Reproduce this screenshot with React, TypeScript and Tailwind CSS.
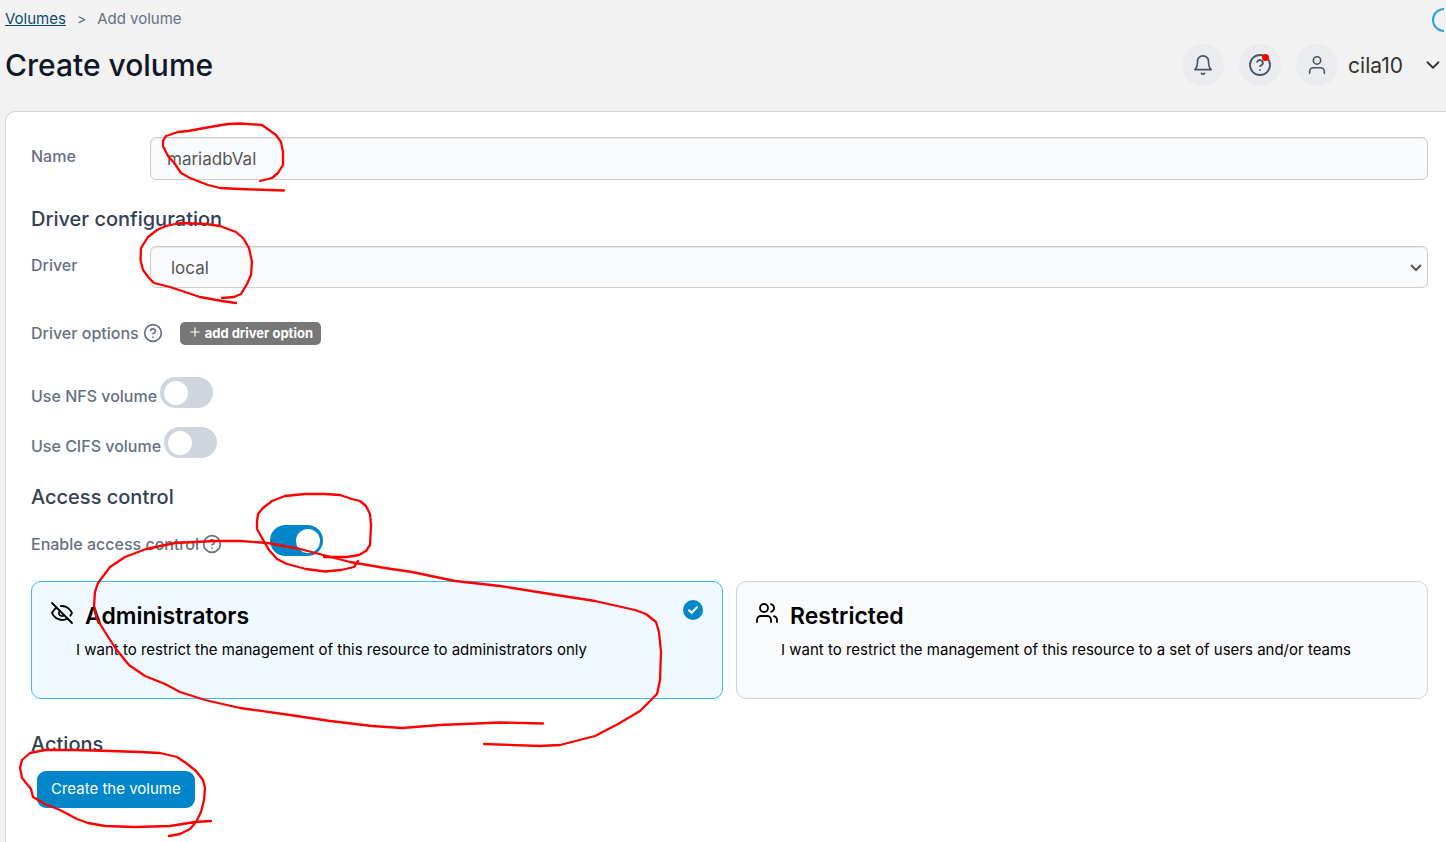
import { useState } from 'react'
import type { ReactNode } from 'react'
import { ChevronDown, HelpCircle, Plus } from 'lucide-react'
import { clsx } from 'clsx'

type Ownership = 'administrators' | 'restricted'

// Pen strokes drawn over the form.
const STROKES = [
  // name
  'M260 181 L272 178 L278 173 L283 165 L283 152 L281 142 L276 135 L262 125 L240 123.5 L228 124 L210 127 L188 131 L178 132 L166 136 L163 141 L163 146 L168 156 L175 164 L181 173 L190 178 L208 185 L220 188 L240 189 L284 190.5',
  // driver
  'M222 298 L234 297 L241 294 L247 284 L251 275 L252 262 L249 248 L243 238 L236 232 L220 226 L206 224 L180 223 L166 226 L157 230 L148 237 L141 248 L140.5 260 L143 270 L149 278 L154 283 L170 287 L200 297 L222 301 L236 303',
  // access control toggle
  'M324 557 L347 557 L359 555 L366 551 L370 545 L371 525 L370 514 L366 506 L360 501 L352 499 L340 495 L325 494 L305 494 L285 496 L272 501 L263 508 L258 514 L257 522 L257 529 L262 538 L269 550 L277 559 L287 564 L306 569 L325 571.5 L341 570 L354 567 L358 561',
  // administrators
  'M543 723.5 L500 722.5 L440 725 L402 728 L372 726 L330 721 L290 715 L240 708 L205 700 L180 692 L165 684 L145 676 L129 665 L116 649 L105 632 L97 619 L94 606 L95 592 L98 583 L110 567 L125 557 L146 549 L175 543 L215 541 L240 541 L268 543 L300 549 L350 562 L385 568 L412 572 L455 581 L500 586 L550 594 L595 601 L635 610 L646 614 L656 622 L659 632 L661 652 L660 680 L657 694 L640 711 L618 724 L595 736 L560 745 L540 746 L484 744',
  // create button
  'M211 821 L195 822 L170 826 L135 827 L105 826 L88 823 L77 819 L60 810 L45 804 L33 797 L31 789 L22 778 L20 768 L22 760 L30 753 L45 750 L75 750 L110 751 L140 752 L160 753 L177 757 L186 763 L196 771 L203 780 L205 788 L204 800 L201 812 L196 822 L190 829 L180 834 L169 836',
]

function Icon({ size, children }: { size: number; children: ReactNode }) {
  return (
    <svg
      width={size}
      height={size}
      viewBox="0 0 24 24"
      fill="none"
      stroke="currentColor"
      strokeWidth="1.8"
      strokeLinecap="round"
      strokeLinejoin="round"
      aria-hidden="true"
      className="shrink-0"
    >
      {children}
    </svg>
  )
}

function BellIcon() {
  return (
    <Icon size={22}>
      <path d="M18 8A6 6 0 0 0 6 8c0 7-3 9-3 9h18s-3-2-3-9" />
      <path d="M13.73 21a2 2 0 0 1-3.46 0" />
    </Icon>
  )
}

function UserIcon() {
  return (
    <Icon size={22}>
      <path d="M20 21v-2a4 4 0 0 0-4-4H8a4 4 0 0 0-4 4v2" />
      <circle cx="12" cy="7" r="4" />
    </Icon>
  )
}

function EyeOffIcon() {
  return (
    <Icon size={24}>
      <path d="M9.88 9.88a3 3 0 1 0 4.24 4.24" />
      <path d="M10.73 5.08A10.43 10.43 0 0 1 12 5c7 0 10 7 10 7a13.16 13.16 0 0 1-1.67 2.68" />
      <path d="M6.61 6.61A13.526 13.526 0 0 0 2 12s3 7 10 7a9.74 9.74 0 0 0 5.39-1.61" />
      <path d="M2 2l20 20" />
    </Icon>
  )
}

function UsersIcon() {
  return (
    <Icon size={24}>
      <path d="M16 21v-2a4 4 0 0 0-4-4H6a4 4 0 0 0-4 4v2" />
      <circle cx="9" cy="7" r="4" />
      <path d="M22 21v-2a4 4 0 0 0-3-3.87" />
      <path d="M16 3.13a4 4 0 0 1 0 7.75" />
    </Icon>
  )
}

const OWNERSHIP_OPTIONS = [
  {
    value: 'administrators' as Ownership,
    label: 'Administrators',
    description: 'I want to restrict the management of this resource to administrators only',
    icon: <EyeOffIcon />,
  },
  {
    value: 'restricted' as Ownership,
    label: 'Restricted',
    description: 'I want to restrict the management of this resource to a set of users and/or teams',
    icon: <UsersIcon />,
  },
]

function SectionTitle({ children, className }: { children: ReactNode; className?: string }) {
  return (
    <h2 className={clsx('mb-[13px] text-xl leading-7 font-medium text-[#344054]', className)}>{children}</h2>
  )
}

function Switch({
  id,
  checked,
  onChange,
}: {
  id: string
  checked: boolean
  onChange: (checked: boolean) => void
}) {
  return (
    <input
      id={id}
      type="checkbox"
      checked={checked}
      onChange={(e) => onChange(e.target.checked)}
      className="flex h-[31px] w-[53px] shrink-0 cursor-pointer appearance-none items-center rounded-full bg-[#d0d5dd] px-1 before:size-6 before:rounded-full before:bg-white checked:justify-end checked:bg-[#0086c9] checked:px-[3px]"
    />
  )
}

function HeaderButton({ label, children }: { label: string; children: ReactNode }) {
  return (
    <button
      type="button"
      aria-label={label}
      className="relative flex size-[42px] items-center justify-center rounded-full bg-[#eaecf0] text-[#475467]"
    >
      {children}
    </button>
  )
}

export default function App() {
  const [name, setName] = useState('mariadbVal')
  const [driver, setDriver] = useState('local')
  const [nfs, setNfs] = useState(false)
  const [cifs, setCifs] = useState(false)
  const [accessControl, setAccessControl] = useState(true)
  const [ownership, setOwnership] = useState<Ownership>('administrators')

  return (
    <div className="relative flex min-h-screen flex-col overflow-hidden bg-[#f2f2f2] pl-[5px] font-['Inter',sans-serif] text-base text-[#667085]">
      <header className="h-[111px] pt-2">
        <nav className="flex items-center gap-[11px] text-[15px] leading-[22px]">
          <a href="#" className="text-[#0b4a6f] underline">
            Volumes
          </a>
          <span className="text-sm">&gt;</span>
          <span>Add volume</span>
        </nav>
        <div className="mt-[14px] flex items-center justify-between pr-[2px]">
          <h1 className="text-[30px] leading-[42px] font-medium text-[#101828]">Create volume</h1>
          <div className="flex items-center gap-[15px]">
            <HeaderButton label="Notifications">
              <BellIcon />
            </HeaderButton>
            <HeaderButton label="Help">
              <HelpCircle size={24} strokeWidth={1.8} />
              <span className="absolute top-[10px] right-3 size-[7px] rounded-full bg-[#ff0000]" />
            </HeaderButton>
            <button type="button" className="flex items-center text-[21px] text-[#333333]">
              <span className="flex size-[42px] items-center justify-center rounded-full bg-[#eaecf0] text-[#475467]">
                <UserIcon />
              </span>
              <span className="ml-[10px] pt-[2px]">cila10</span>
              <ChevronDown size={22} className="ml-[19px]" />
            </button>
          </div>
        </div>
        <svg className="absolute top-2 right-[2px]" width="14" height="24" fill="none" aria-hidden="true">
          <path d="M14 1A11 11 0 0 0 14 23" stroke="#2d9fe3" strokeWidth="2" />
        </svg>
      </header>

      <form
        className="flex-1 rounded-tl-[10px] border-t border-l border-[#d0d5dd] bg-white pt-[25px] pr-[18px] pb-[34px] pl-[25px]"
        onSubmit={(e) => e.preventDefault()}
      >
        <div className="flex items-start">
          <label htmlFor="volume_name" className="w-[119px] shrink-0 pt-[7px] font-medium">
            Name
          </label>
          <input
            id="volume_name"
            type="text"
            value={name}
            onChange={(e) => setName(e.target.value)}
            className="h-[43px] min-w-0 flex-1 rounded-md border border-[#cccccc] bg-[#f9fafb] px-4 text-[17px] text-[#555555] shadow-[inset_0_1px_1px_rgba(0,0,0,0.075)]"
          />
        </div>

        <SectionTitle className="mt-[25px]">Driver configuration</SectionTitle>
        <div className="flex items-start">
          <label htmlFor="volume_driver" className="w-[119px] shrink-0 pt-[7px] font-medium">
            Driver
          </label>
          <div className="relative min-w-0 flex-1">
            <select
              id="volume_driver"
              value={driver}
              onChange={(e) => setDriver(e.target.value)}
              className="block h-[42px] w-full appearance-none rounded-md border border-[#cccccc] bg-[#f9fafb] px-5 pt-[3px] text-[17px] text-[#555555] shadow-[inset_0_1px_1px_rgba(0,0,0,0.075)]"
            >
              <option value="local">local</option>
            </select>
            <svg
              className="pointer-events-none absolute top-[17px] right-[6px]"
              width="12"
              height="9"
              fill="none"
              stroke="#555555"
              strokeWidth="2"
              aria-hidden="true"
            >
              <path d="M1 2L6 7L11 2" />
            </svg>
          </div>
        </div>

        <div className="mt-[33px] flex h-6 items-center">
          <span className="font-medium">Driver options</span>
          <HelpCircle size={20} className="ml-1" />
          <button
            type="button"
            className="ml-[17px] flex h-[23px] items-center rounded-[5px] bg-[#777777] px-2 pt-[2px] text-[13px] font-bold text-white"
          >
            <Plus size={14} className="mr-[3px] mb-1" />
            add driver option
          </button>
        </div>

        <div className="mt-8 flex items-end gap-[3px]">
          <label htmlFor="use_nfs" className="font-medium">
            Use NFS volume
          </label>
          <Switch id="use_nfs" checked={nfs} onChange={setNfs} />
        </div>
        <div className="mt-[19px] flex items-end gap-[3px]">
          <label htmlFor="use_cifs" className="font-medium">
            Use CIFS volume
          </label>
          <Switch id="use_cifs" checked={cifs} onChange={setCifs} />
        </div>

        <SectionTitle className="mt-[25px]">Access control</SectionTitle>
        <div className="flex h-8 items-end">
          <label htmlFor="access_control" className="flex w-[239px] items-center gap-[3px] font-medium">
            Enable access control
            <HelpCircle size={20} />
          </label>
          <Switch id="access_control" checked={accessControl} onChange={setAccessControl} />
        </div>

        {accessControl ? (
          <div className="mt-[25px] grid grid-cols-2 gap-[13px]">
            {OWNERSHIP_OPTIONS.map(({ value, label, description, icon }) => (
              <label
                key={value}
                className={clsx(
                  'relative h-[118px] cursor-pointer rounded-[10px] border px-[18px] pt-[19px] text-black',
                  ownership === value ? 'border-[#36bffa] bg-[#f0f9ff]' : 'border-[#d0d5dd] bg-[#f9fafb]',
                )}
              >
                <input
                  type="radio"
                  name="ownership"
                  value={value}
                  checked={ownership === value}
                  onChange={() => setOwnership(value)}
                  className="sr-only"
                />
                <span className="flex items-start gap-[11px] text-[23px] leading-[30px] font-semibold">
                  {icon}
                  {label}
                </span>
                <span className="mt-[7px] block pl-[26px] text-[15px] leading-6">{description}</span>
                {ownership === value ? (
                  <svg className="absolute top-[18px] right-[19px]" width="20" height="20" viewBox="0 0 20 20" fill="none">
                    <circle cx="10" cy="10" r="10" fill="#0086c9" />
                    <path d="M6 10.3L8.7 12.8L14 7.3" stroke="white" strokeWidth="2" strokeLinecap="round" />
                  </svg>
                ) : null}
              </label>
            ))}
          </div>
        ) : null}

        <SectionTitle className="mt-[31px]">Actions</SectionTitle>
        <button
          type="submit"
          className="ml-[6px] h-[37px] rounded-[9px] bg-[#0086c9] px-[14px] text-[15px] text-white"
        >
          Create the volume
        </button>
      </form>

      <svg
        className="pointer-events-none absolute top-0 left-0"
        width="1446"
        height="842"
        fill="none"
        stroke="#ff0000"
        strokeWidth="2.3"
        strokeLinecap="round"
        strokeLinejoin="round"
        aria-hidden="true"
      >
        {STROKES.map((d) => (
          <path key={d} d={d} />
        ))}
      </svg>
    </div>
  )
}
